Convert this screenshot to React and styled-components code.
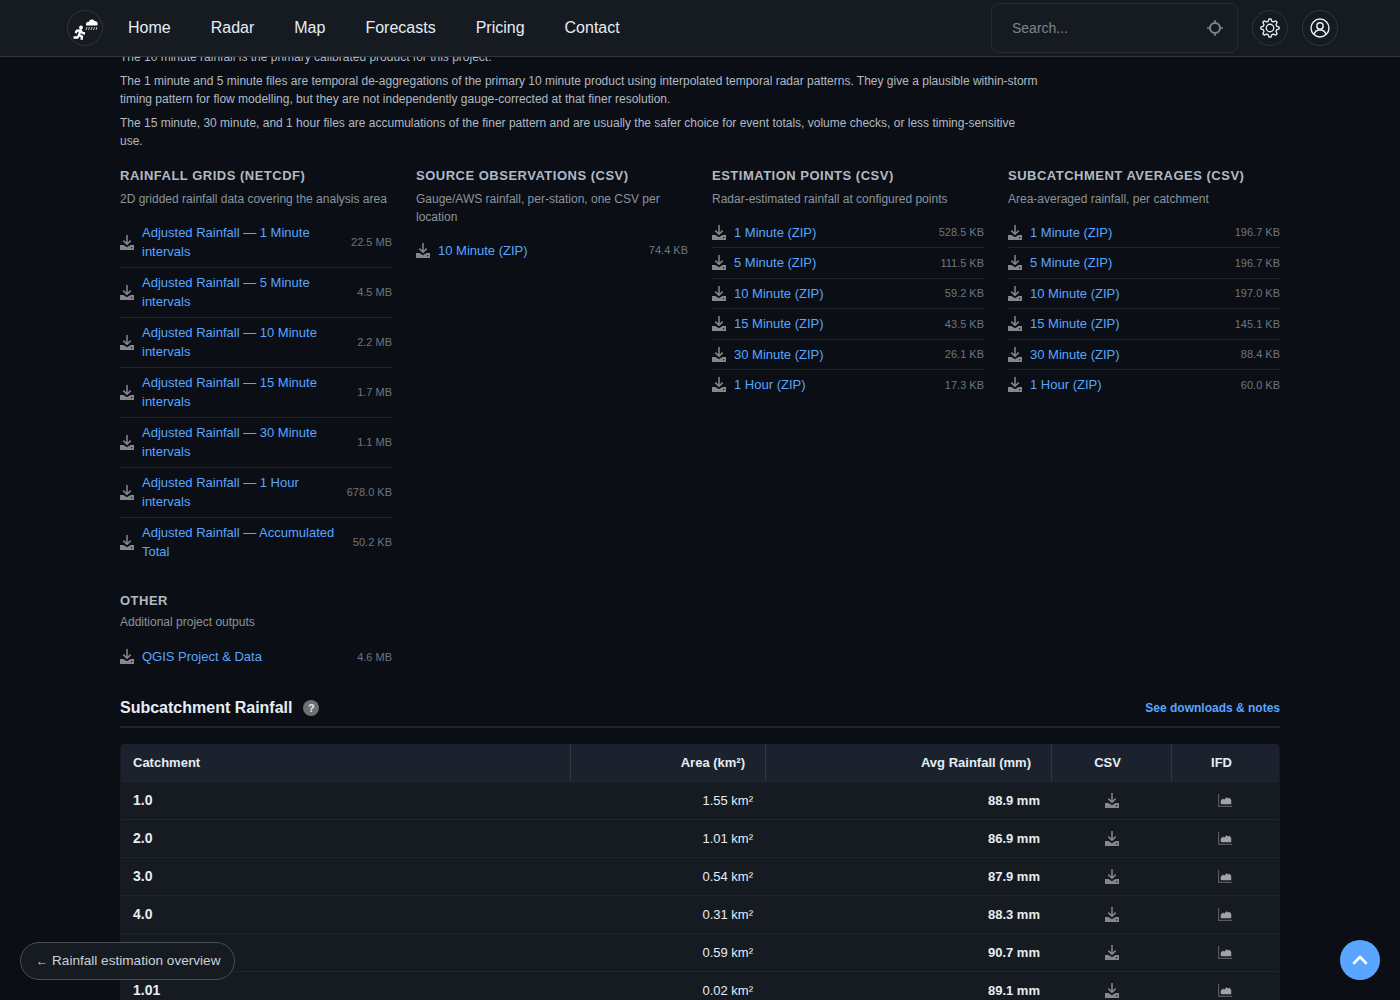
import styled, { createGlobalStyle } from 'styled-components';

const GlobalStyle = createGlobalStyle`
  html, body { margin: 0; padding: 0; background: #0b0e14; overflow: hidden; }
  body { font-family: "Liberation Sans", Arial, sans-serif; color: #c9d1d9; }
  * { box-sizing: border-box; }
`;

const navLinks = ['Home', 'Radar', 'Map', 'Forecasts', 'Pricing', 'Contact'];

const groups = [
  {
    title: 'Rainfall grids (NetCDF)',
    note: '2D gridded rainfall data covering the analysis area',
    files: [
      ['Adjusted Rainfall — 1 Minute intervals', '22.5 MB'],
      ['Adjusted Rainfall — 5 Minute intervals', '4.5 MB'],
      ['Adjusted Rainfall — 10 Minute intervals', '2.2 MB'],
      ['Adjusted Rainfall — 15 Minute intervals', '1.7 MB'],
      ['Adjusted Rainfall — 30 Minute intervals', '1.1 MB'],
      ['Adjusted Rainfall — 1 Hour intervals', '678.0 KB'],
      ['Adjusted Rainfall — Accumulated Total', '50.2 KB'],
    ],
  },
  {
    title: 'Source observations (CSV)',
    note: 'Gauge/AWS rainfall, per-station, one CSV per location',
    files: [['10 Minute (ZIP)', '74.4 KB']],
  },
  {
    title: 'Estimation points (CSV)',
    note: 'Radar-estimated rainfall at configured points',
    files: [
      ['1 Minute (ZIP)', '528.5 KB'],
      ['5 Minute (ZIP)', '111.5 KB'],
      ['10 Minute (ZIP)', '59.2 KB'],
      ['15 Minute (ZIP)', '43.5 KB'],
      ['30 Minute (ZIP)', '26.1 KB'],
      ['1 Hour (ZIP)', '17.3 KB'],
    ],
  },
  {
    title: 'Subcatchment averages (CSV)',
    note: 'Area-averaged rainfall, per catchment',
    files: [
      ['1 Minute (ZIP)', '196.7 KB'],
      ['5 Minute (ZIP)', '196.7 KB'],
      ['10 Minute (ZIP)', '197.0 KB'],
      ['15 Minute (ZIP)', '145.1 KB'],
      ['30 Minute (ZIP)', '88.4 KB'],
      ['1 Hour (ZIP)', '60.0 KB'],
    ],
  },
];

const rows = [
  ['1.0', '1.55 km²', '88.9 mm'],
  ['2.0', '1.01 km²', '86.9 mm'],
  ['3.0', '0.54 km²', '87.9 mm'],
  ['4.0', '0.31 km²', '88.3 mm'],
  ['5.0', '0.59 km²', '90.7 mm'],
  ['1.01', '0.02 km²', '89.1 mm'],
];

// 8 tooth outline for the settings gear
const gearPoints = Array.from({ length: 32 }, (_, i) => {
  const tooth = [11, 11, 8.2, 8.2][i % 4];
  const angle = ((i - 0.5) * 11.25 - 90) * (Math.PI / 180);
  return `${(12 + tooth * Math.cos(angle)).toFixed(2)},${(12 + tooth * Math.sin(angle)).toFixed(2)}`;
}).join(' ');

const DownloadIcon = () => (
  <svg width="14" height="15" viewBox="0 0 14 15">
    <path d="M7 0v9M3.300 5.600 7 9.300l3.700-3.700" fill="none" stroke="currentColor" strokeWidth="1.500" />
    <path d="M0 10h3.400L7 12.300 10.600 10H14v5H0z" fill="currentColor" />
    <circle cx="11.600" cy="12.800" r=".8" fill="#161b22" />
  </svg>
);

const AreaIcon = () => (
  <svg width="14" height="13" viewBox="0 0 14 13">
    <path d="M.6 0v12.400H14" fill="none" stroke="#55595f" strokeWidth="1.200" />
    <path d="M3 10V6.500l1.800-1.600 1.700.9L8.500 3.500l1.500 1.300 1.500-.8 1.500 2V10z" fill="#a3a3a3" stroke="#a3a3a3" strokeWidth=".5" strokeLinejoin="round" />
  </svg>
);

const Logo = () => (
  <svg width="26" height="24" viewBox="0 0 26 24" fill="#fff">
    <path d="M14 9.500c-.6-2.300 1-3.900 2.900-3.600C17.600 3.300 21 2.600 22.400 5c2-.2 3.600 1.400 3.300 3.300-.1.800-.6 1.200-1.400 1.200z" />
    <path d="M15 11l-1 3M17.500 11l-1 3M20 11l-1 3M22.500 11l-1 3M25 11l-1 3" stroke="#fff" strokeWidth=".7" fill="none" />
    <circle cx="9" cy="11.500" r="1.900" />
    <path d="M3.500 17l1.500-2.300 3.500-.2-1.500 4.500 3 1.700-.5 3M8.500 14.500l2 2.500 2.500.5M7 19l-1.500 2.500H1.500" fill="none" stroke="#fff" strokeWidth="2.300" />
  </svg>
);

const LocateIcon = () => (
  <svg width="16" height="16" viewBox="0 0 16 16" fill="none" stroke="currentColor">
    <circle cx="8" cy="8" r="5" strokeWidth="2" />
    <path d="M8 0v3M8 13v3M0 8h3M13 8h3" strokeWidth="1.600" />
  </svg>
);

const GearIcon = () => (
  <svg width="20" height="20" viewBox="0 0 24 24" fill="none" stroke="currentColor" strokeWidth="1.600" strokeLinejoin="round">
    <polygon points={gearPoints} />
    <circle cx="12" cy="12" r="4.500" />
  </svg>
);

const UserIcon = () => (
  <svg width="20" height="20" viewBox="0 0 24 24" fill="none" stroke="currentColor" strokeWidth="1.700">
    <circle cx="12" cy="12" r="10.800" />
    <circle cx="12" cy="9.500" r="3.800" />
    <path d="M5 20c.6-3.800 3-5.600 7-5.600s6.400 1.800 7 5.600" />
  </svg>
);

const ChevronIcon = () => (
  <svg width="16" height="10" viewBox="0 0 16 10" fill="none" stroke="#fff" strokeWidth="2.600" strokeLinecap="round" strokeLinejoin="round">
    <path d="M2 8l6-6 6 6" />
  </svg>
);

export default function App() {
  return (
    <>
      <GlobalStyle />
      <NavBar>
        <LogoBadge><Logo /></LogoBadge>
        <NavLinks>
          {navLinks.map((link) => <NavLink key={link}>{link}</NavLink>)}
        </NavLinks>
        <SearchBox>
          <SearchText>Search...</SearchText>
          <LocateIcon />
        </SearchBox>
        <RoundButton><GearIcon /></RoundButton>
        <RoundButton><UserIcon /></RoundButton>
      </NavBar>

      <Page>
        <Notes>
          <p>The 10 minute rainfall is the primary calibrated product for this project.</p>
          <p>The 1 minute and 5 minute files are temporal de-aggregations of the primary 10 minute product using interpolated temporal radar patterns. They give a plausible within-storm timing pattern for flow modelling, but they are not independently gauge-corrected at that finer resolution.</p>
          <p>The 15 minute, 30 minute, and 1 hour files are accumulations of the finer pattern and are usually the safer choice for event totals, volume checks, or less timing-sensitive use.</p>
        </Notes>

        <Groups>
          {groups.map((group) => (
            <div key={group.title}>
              <GroupTitle>{group.title}</GroupTitle>
              <GroupNote>{group.note}</GroupNote>
              <FileList files={group.files} />
            </div>
          ))}
        </Groups>

        <OtherGroup>
          <GroupTitle $tight>Other</GroupTitle>
          <GroupNote $wide>Additional project outputs</GroupNote>
          <FileList files={[['QGIS Project & Data', '4.6 MB']]} />
        </OtherGroup>

        <SectionHead>
          <SectionTitle>Subcatchment Rainfall</SectionTitle>
          <HelpDot>?</HelpDot>
          <SectionLink>See downloads &amp; notes</SectionLink>
        </SectionHead>

        <TableWrap>
          <HeadRow>
            <HeadCell>Catchment</HeadCell>
            <HeadCell $right>Area (km²)</HeadCell>
            <HeadCell $right>Avg Rainfall (mm)</HeadCell>
            <HeadCell $center>CSV</HeadCell>
            <HeadCell $center $last>IFD</HeadCell>
          </HeadRow>
          {rows.map(([name, area, rain]) => (
            <BodyRow key={name}>
              <NameCell>{name}</NameCell>
              <AreaCell>{area}</AreaCell>
              <RainCell>{rain}</RainCell>
              <IconCell><DownloadIcon /></IconCell>
              <IconCell $nudge><AreaIcon /></IconCell>
            </BodyRow>
          ))}
        </TableWrap>
      </Page>

      <BackPill><small>←</small> Rainfall estimation overview</BackPill>
      <TopButton><ChevronIcon /></TopButton>
    </>
  );
}

function FileList({ files }) {
  return (
    <Files>
      {files.map(([label, size]) => (
        <FileRow key={label}>
          <FileIcon><DownloadIcon /></FileIcon>
          <FileLink>{label}</FileLink>
          <FileSize>{size}</FileSize>
        </FileRow>
      ))}
    </Files>
  );
}

const NavBar = styled.header`
  position: fixed;
  top: 0;
  left: 0;
  right: 0;
  z-index: 10;
  height: 57px;
  display: flex;
  align-items: center;
  padding: 0 62px 1px 67px;
  background: #161b22;
  border-bottom: 1px solid #30363d;
`;

const LogoBadge = styled.div`
  width: 36px;
  height: 36px;
  border-radius: 50%;
  border: 1px solid #30363d;
  display: grid;
  place-content: center;
`;

const NavLinks = styled.nav`
  display: flex;
  gap: 40px;
  margin-left: 25px;
  flex: 1;
`;

const NavLink = styled.a`
  font-size: 16px;
  color: #e6edf3;
`;

const SearchBox = styled.div`
  width: 247px;
  height: 50px;
  display: flex;
  align-items: center;
  justify-content: space-between;
  padding: 0 14px 0 20px;
  border: 1px solid #262b33;
  border-radius: 8px;
  background: #161b22;
  color: #7d8590;
`;

const SearchText = styled.span`
  font-size: 14px;
`;

const RoundButton = styled.div`
  width: 36px;
  height: 36px;
  margin-left: 14px;
  border-radius: 50%;
  border: 1px solid #30363d;
  display: grid;
  place-content: center;
  color: #e6edf3;
`;

const Page = styled.main`
  width: 1160px;
  margin: 0 auto;
  padding-top: 48px;
  height: 1000px;
  overflow: hidden;
`;

const Notes = styled.div`
  width: 920px;
  font-size: 12px;
  line-height: 18px;
  color: #b1bac4;

  p {
    margin: 0 0 6px;
  }
`;

const Groups = styled.section`
  display: grid;
  grid-template-columns: repeat(4, 272px);
  column-gap: 24px;
  margin-top: 17px;
`;

const OtherGroup = styled.section`
  width: 272px;
  margin-top: 25.5px;
`;

const GroupTitle = styled.h4`
  margin: 0 0 ${({ $tight }) => ($tight ? '3px' : '5px')};
  font-size: 13px;
  line-height: 18px;
  font-weight: 700;
  letter-spacing: 0.5px;
  text-transform: uppercase;
  color: #b1bac4;
`;

const GroupNote = styled.p`
  margin: 0 0 ${({ $wide }) => ($wide ? '11px' : '9.5px')};
  font-size: 12px;
  line-height: 18px;
  color: #8b949e;
`;

const Files = styled.div`
  display: flex;
  flex-direction: column;
`;

const FileRow = styled.div`
  display: flex;
  align-items: center;
  padding: 5px 0;
  border-bottom: 1px solid #21262d;

  &:last-child {
    border-bottom: none;
  }
`;

const FileIcon = styled.span`
  flex: none;
  display: flex;
  width: 22px;
  color: #85888c;
`;

const FileLink = styled.a`
  flex: 1;
  font-size: 13px;
  line-height: 19.5px;
  color: #58a6ff;
`;

const FileSize = styled.span`
  flex: none;
  margin-left: 12px;
  font-size: 11px;
  color: #6e7681;
`;

const SectionHead = styled.div`
  display: flex;
  align-items: center;
  height: 39px;
  margin-top: 17px;
  padding-top: 1px;
  border-bottom: 2px solid #21262d;
`;

const SectionTitle = styled.h3`
  margin: 0;
  font-size: 16px;
  font-weight: 700;
  color: #e6edf3;
`;

const HelpDot = styled.span`
  width: 16px;
  height: 16px;
  margin-left: 11px;
  border-radius: 50%;
  background: #707070;
  color: #e6edf3;
  font-size: 11px;
  font-weight: 700;
  line-height: 16px;
  text-align: center;
`;

const SectionLink = styled.a`
  margin-left: auto;
  font-size: 12px;
  font-weight: 700;
  color: #58a6ff;
`;

const TableWrap = styled.div`
  margin-top: 16px;
  border-radius: 4px 4px 0 0;
  border-left: 1px solid #161b22;
  border-right: 1px solid #161b22;
  overflow: hidden;
  background: #161b22;
`;

const HeadRow = styled.div`
  display: grid;
  grid-template-columns: 450px 195px 286px 120px 107px;
  height: 38px;
  background: #1c222d;
  border-bottom: 1px solid #21262d;
`;

const HeadCell = styled.div`
  display: flex;
  align-items: center;
  justify-content: ${({ $right, $center }) => ($right ? 'flex-end' : $center ? 'center' : 'flex-start')};
  padding: 0 20px 0 12px;
  font-size: 13px;
  font-weight: 700;
  color: #e6edf3;
  border-right: ${({ $last }) => ($last ? 'none' : '1px solid #30363d')};
`;

const BodyRow = styled.div`
  display: grid;
  grid-template-columns: 450px 195px 286px 120px 107px;
  height: 38px;
  align-items: center;
  border-bottom: 1px solid #21262d;
`;

const NameCell = styled.div`
  padding-left: 12px;
  font-size: 14px;
  font-weight: 700;
  color: #e6edf3;
`;

const AreaCell = styled.div`
  padding-right: 13px;
  font-size: 13px;
  text-align: right;
  color: #e6edf3;
`;

const RainCell = styled.div`
  padding-right: 12px;
  font-size: 13px;
  font-weight: 700;
  text-align: right;
  color: #e6edf3;
`;

const IconCell = styled.div`
  display: flex;
  justify-content: center;
  padding-right: ${({ $nudge }) => ($nudge ? '2px' : '0')};
  color: #85888c;
`;

const BackPill = styled.div`
  position: fixed;
  left: 20px;
  bottom: 20px;
  height: 38px;
  padding: 0 14px 1px 15px;
  display: flex;
  align-items: center;
  gap: 4px;
  border: 1px solid #484f58;
  border-radius: 19px;
  background: #161b22;
  font-size: 13.6px;
  color: #c9d1d9;

  small {
    font-size: 12px;
  }
`;

const TopButton = styled.div`
  position: fixed;
  right: 20px;
  bottom: 20px;
  width: 40px;
  height: 40px;
  border-radius: 50%;
  background: #58a6ff;
  display: grid;
  place-content: center;
`;
